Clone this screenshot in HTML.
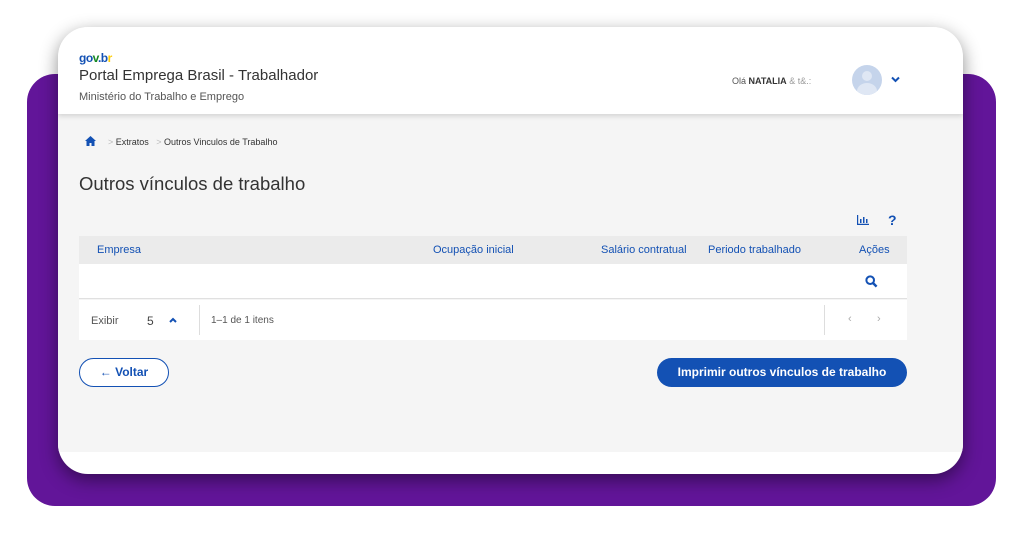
<!DOCTYPE html>
<html><head><meta charset="utf-8"><style>
*{box-sizing:border-box;margin:0;padding:0}
body{width:1024px;height:536px;background:#fff;position:relative;overflow:hidden;font-family:"Liberation Sans",sans-serif;color:#333}
.purple{position:absolute;left:27px;top:74px;width:969px;height:432px;background:#621599;border-radius:28px}
.card{position:absolute;left:58px;top:27px;width:905px;height:447px;background:#fff;border-radius:30px;overflow:hidden;box-shadow:0 6px 18px rgba(0,0,0,.45)}
.header{position:absolute;left:0;top:0;width:905px;height:87px;background:#fff;box-shadow:0 2px 5px rgba(0,0,0,.15);z-index:2}
.content{position:absolute;left:0;top:87px;width:905px;height:338px;background:#f5f5f5}
.abs{position:absolute;white-space:nowrap}
.blue{color:#1351b4}
</style></head><body>
<div class="purple"></div>
<div class="card">
 <div class="header">
  <div class="abs" style="left:21px;top:24px;font-size:12px;font-weight:bold;letter-spacing:-0.5px"><span style="color:#1351b4">go</span><span style="color:#168821">v</span><span style="color:#1351b4">.b</span><span style="color:#ffcd07">r</span></div>
  <div class="abs" style="left:21px;top:40px;font-size:15px;color:#333">Portal Emprega Brasil - Trabalhador</div>
  <div class="abs" style="left:21px;top:64px;font-size:11px;color:#555">Ministério do Trabalho e Emprego</div>
  <div class="abs" style="left:674px;top:49px;font-size:9px;color:#555">Olá <b style="color:#333">NATALIA</b> <span style="color:#999">&amp; t&amp;.:</span></div>
  <div class="abs" style="left:794px;top:38px;width:30px;height:30px;border-radius:50%;background:#c5d4eb;overflow:hidden">
   <div style="position:absolute;left:10px;top:6px;width:10px;height:10px;border-radius:50%;background:#dfe7f4"></div>
   <div style="position:absolute;left:5px;top:18px;width:20px;height:16px;border-radius:50%;background:#dfe7f4"></div>
  </div>
  <svg class="abs" style="left:833px;top:49px" width="9" height="7" viewBox="0 0 9 7"><path d="M1 1.5L4.5 5 8 1.5" stroke="#1351b4" stroke-width="2" fill="none"/></svg>
 </div>
 <div class="content">
  <svg class="abs" style="left:27px;top:22px" width="11" height="10" viewBox="0 0 11 10"><path d="M5.5 0L0 5h1.5v5h3V7h2v3h3V5H11z" fill="#1351b4"/></svg>
  <div class="abs" style="left:50px;top:23px;font-size:9px;color:#333"><span style="color:#bbb">&gt;</span> Extratos &nbsp;&nbsp;<span style="color:#bbb">&gt;</span> Outros Vinculos de Trabalho</div>
  <div class="abs" style="left:21px;top:59px;font-size:18.5px;color:#333">Outros vínculos de trabalho</div>
  <svg class="abs" style="left:799px;top:101px" width="12" height="10" viewBox="0 0 12 10"><path d="M0.5 0v9.5H12" stroke="#1351b4" stroke-width="1.4" fill="none"/><rect x="3" y="4" width="1.5" height="4" fill="#1351b4"/><rect x="6" y="2" width="1.5" height="6" fill="#1351b4"/><rect x="9" y="4" width="1.5" height="4" fill="#1351b4"/></svg>
  <div class="abs" style="left:830px;top:98px;font-size:14px;font-weight:bold;color:#1351b4">?</div>
  <div class="abs" style="left:21px;top:122px;width:828px;height:28px;background:#ebebeb"></div>
  <div class="abs blue" style="left:39px;top:130px;font-size:11px">Empresa</div>
  <div class="abs blue" style="left:375px;top:130px;font-size:11px">Ocupação inicial</div>
  <div class="abs blue" style="left:543px;top:130px;font-size:11px">Salário contratual</div>
  <div class="abs blue" style="left:650px;top:130px;font-size:11px">Periodo trabalhado</div>
  <div class="abs blue" style="left:801px;top:130px;font-size:11px">Ações</div>
  <div class="abs" style="left:21px;top:150px;width:828px;height:35px;background:#fff;border-bottom:1px solid #e0e0e0"></div>
  <svg class="abs" style="left:807px;top:161px" width="13" height="13" viewBox="0 0 13 13"><circle cx="5.2" cy="5.2" r="3.8" stroke="#1351b4" stroke-width="2" fill="none"/><path d="M8 8l3.6 3.6" stroke="#1351b4" stroke-width="2.4"/></svg>
  <div class="abs" style="left:21px;top:186px;width:828px;height:40px;background:#fff"></div>
  <div class="abs" style="left:33px;top:201px;font-size:11px;color:#555">Exibir</div>
  <div class="abs" style="left:89px;top:200px;font-size:12px;color:#444">5</div>
  <svg class="abs" style="left:111px;top:203px" width="8" height="6" viewBox="0 0 8 6"><path d="M1 5L4 2 7 5" stroke="#1351b4" stroke-width="2" fill="none"/></svg>
  <div class="abs" style="left:141px;top:191px;width:1px;height:30px;background:#ddd"></div>
  <div class="abs" style="left:153px;top:201px;font-size:10px;color:#555">1–1 de 1 itens</div>
  <div class="abs" style="left:766px;top:191px;width:1px;height:30px;background:#ddd"></div>
  <div class="abs" style="left:790px;top:199px;font-size:11px;color:#aaa">‹</div>
  <div class="abs" style="left:819px;top:199px;font-size:11px;color:#aaa">›</div>
  <div class="abs" style="left:21px;top:244px;width:90px;height:29px;border:1px solid #1351b4;border-radius:15px;background:#fff;text-align:center;line-height:27px;font-size:12px;font-weight:bold;color:#1351b4">← Voltar</div>
  <div class="abs" style="left:599px;top:244px;width:250px;height:29px;border-radius:15px;background:#1351b4;text-align:center;line-height:29px;font-size:12px;font-weight:bold;color:#fff">Imprimir outros vínculos de trabalho</div>
 </div>
</div>
</body></html>
